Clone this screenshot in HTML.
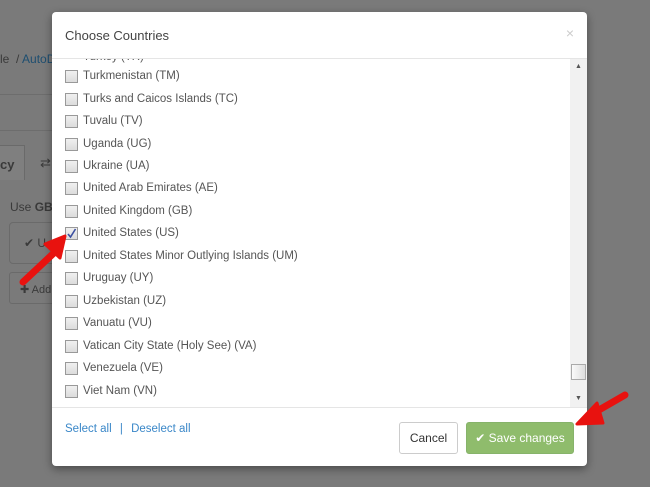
<!DOCTYPE html>
<html><head><style>
body{margin:0;width:650px;height:487px;background:#7a7a7a;font-family:"Liberation Sans",sans-serif;position:relative;overflow:hidden}
.bg{position:absolute;color:#3a3a3a;font-size:12px}
.modal{position:absolute;left:52px;top:12px;width:535px;height:454px;background:#fff;border-radius:4px;box-shadow:0 3px 9px rgba(0,0,0,.4)}
.hd{height:46px;border-bottom:1px solid #e5e5e5;position:relative}
.hd h4{margin:0;position:absolute;left:13px;top:16px;font-weight:normal;font-size:13px;color:#444}
.x{position:absolute;right:13px;top:13px;color:#ccc;font-size:14px}
.list{position:absolute;left:0;top:47px;width:518px;height:348px;overflow:hidden}
.row{position:absolute;left:13px;height:14px;font-size:11.5px;color:#555;line-height:14px}
.cb{position:absolute;left:0;top:0;width:11px;height:11px;border:1px solid #999;background:linear-gradient(#f0f0f0,#dcdcdc)}
.row span{position:absolute;left:18px;top:-1px;white-space:nowrap}
.sb{position:absolute;left:518px;top:47px;width:17px;height:348px;background:#f1f1f1}
.ft{position:absolute;left:0;top:395px;width:535px;height:59px;border-top:1px solid #e5e5e5}
a{color:#3a87c8;text-decoration:none}
.btn{position:absolute;top:14px;height:30px;border-radius:3px;font-size:12px;line-height:30px;text-align:center}
</style></head><body>
<div class="bg" style="left:0;top:52px">le &nbsp;/ <span style="color:#1d4e70">AutoD</span></div>
<div style="position:absolute;left:0;top:94px;width:60px;height:1px;background:#6d6d6d"></div>
<div style="position:absolute;left:0;top:130px;width:60px;height:1px;background:#6d6d6d"></div>
<div style="position:absolute;left:-5px;top:145px;width:28px;height:34px;border:1px solid #6a6a6a;border-bottom:none;background:#7f7f7f"></div>
<div class="bg" style="left:0;top:157px;font-weight:bold;font-size:13px">cy</div>
<div class="bg" style="left:40px;top:155px;font-size:13px">⇄</div>
<div class="bg" style="left:10px;top:200px">Use <b>GBP</b></div>
<div style="position:absolute;left:9px;top:222px;width:50px;height:40px;border:1px solid #6a6a6a;border-radius:4px"></div>
<div class="bg" style="left:24px;top:236px">✔ U</div>
<div style="position:absolute;left:9px;top:272px;width:50px;height:30px;border:1px solid #6a6a6a;border-radius:3px"></div>
<div class="bg" style="left:20px;top:283px;font-size:11px">✚ Add</div>

<div class="modal">
<div class="hd"><h4>Choose Countries</h4><span class="x">×</span></div>
<div class="list">
<div class="row" style="top:11px"><div class="cb"></div><span>Turkmenistan (TM)</span></div>
<div class="row" style="top:34px"><div class="cb"></div><span>Turks and Caicos Islands (TC)</span></div>
<div class="row" style="top:56px"><div class="cb"></div><span>Tuvalu (TV)</span></div>
<div class="row" style="top:79px"><div class="cb"></div><span>Uganda (UG)</span></div>
<div class="row" style="top:101px"><div class="cb"></div><span>Ukraine (UA)</span></div>
<div class="row" style="top:123px"><div class="cb"></div><span>United Arab Emirates (AE)</span></div>
<div class="row" style="top:146px"><div class="cb"></div><span>United Kingdom (GB)</span></div>
<div class="row" style="top:168px"><div class="cb"><svg width="11" height="11" style="position:absolute;left:0;top:0"><path d="M2 6 L4.5 9 L9.5 1" stroke="#3b4fa0" stroke-width="1.6" fill="none"/></svg></div><span>United States (US)</span></div>
<div class="row" style="top:191px"><div class="cb"></div><span>United States Minor Outlying Islands (UM)</span></div>
<div class="row" style="top:213px"><div class="cb"></div><span>Uruguay (UY)</span></div>
<div class="row" style="top:236px"><div class="cb"></div><span>Uzbekistan (UZ)</span></div>
<div class="row" style="top:258px"><div class="cb"></div><span>Vanuatu (VU)</span></div>
<div class="row" style="top:281px"><div class="cb"></div><span>Vatican City State (Holy See) (VA)</span></div>
<div class="row" style="top:303px"><div class="cb"></div><span>Venezuela (VE)</span></div>
<div class="row" style="top:326px"><div class="cb"></div><span>Viet Nam (VN)</span></div>
<div class="row" style="top:348px"><div class="cb"></div></div>
<div class="row" style="top:-8px"><span>Turkey (TR)</span></div>
</div>
<div class="sb"><div style="position:absolute;left:5px;top:4px;font-size:7px;color:#555">▲</div>
<div style="position:absolute;left:1px;top:305px;width:13px;height:14px;border:1px solid #aaa;background:linear-gradient(90deg,#fafafa,#ddd)"></div>
<div style="position:absolute;left:5px;top:336px;font-size:7px;color:#555">▼</div></div>
<div class="ft">
<div style="position:absolute;left:13px;top:15px;font-size:11.5px"><a>Select all</a> <span style="color:#3a87c8;margin:0 5px">|</span> <a>Deselect all</a></div>
<div class="btn" style="left:347px;width:57px;border:1px solid #ccc;color:#333">Cancel</div>
<div class="btn" style="left:414px;width:106px;border:1px solid #86b36a;background:#8fbc6c;color:#fff">✔ Save changes</div>
</div>
</div>
<svg width="650" height="487" style="position:absolute;left:0;top:0">
<g fill="#e8120f" stroke="#e8120f" stroke-linejoin="round" stroke-linecap="round">
<path d="M23 282 L55 252" stroke-width="7"/>
<path d="M45 244 L65 236 L60 258 Z" stroke-width="3"/>
<path d="M625 395 L592 414" stroke-width="7"/>
<path d="M597 403 L577 424 L603 423 Z" stroke-width="3"/>
</g></svg>
</body></html>
